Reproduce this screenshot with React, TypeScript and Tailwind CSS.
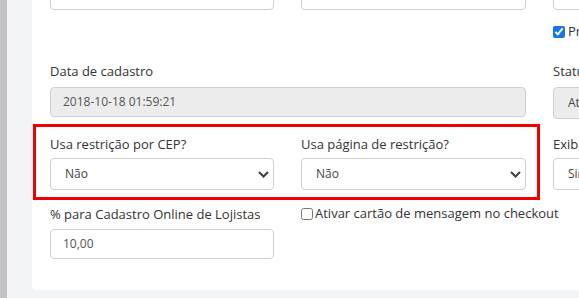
import { ReactNode } from 'react';

const font = { fontFamily: '"Open Sans", "Liberation Sans", sans-serif' };

const Label = ({ children }: { children: ReactNode }) => (
    <div className="h-[18px] leading-[18px] text-[13px] text-[#333] whitespace-nowrap">{children}</div>
);

const TextInput = ({ value, disabled }: { value?: string; disabled?: boolean }) => (
    <div className={`h-[30px] flex items-center px-[12px] border border-[#cfcfcf] rounded-[4px] text-[12px] text-[#555] whitespace-nowrap overflow-hidden ${disabled ? 'bg-[#ececec]' : 'bg-white'}`}>
        {value}
    </div>
);

const Select = ({ value, disabled }: { value: string; disabled?: boolean }) => (
    <div className={`h-[32px] flex items-center justify-between pl-[14px] pr-[4px] border border-[#cfcfcf] rounded-[4px] text-[12px] text-[#444] whitespace-nowrap ${disabled ? 'bg-[#ececec]' : 'bg-white'}`}>
        <span>{value}</span>
        <svg width="11" height="7" viewBox="0 0 11 7" className="shrink-0">
            <polyline points="1,1 5.5,5.5 10,1" fill="none" stroke="#3a3f44" strokeWidth="2" />
        </svg>
    </div>
);

export default function App() {
    return (
        <div className="w-[579px] h-[298px] overflow-hidden flex bg-[#f3f4f6]" style={font}>
            <div className="w-[7px] shrink-0 bg-[#c2c2c2]" />
            <div className="flex-1 pl-[25px] pb-[8px] flex flex-col overflow-hidden">
                <div className="mt-[-40px] flex-1 bg-white rounded-b-[4px] pt-[20px] pl-[18px] w-[620px]">
                    {/* top row, scrolled out of view */}
                    <div className="grid grid-cols-[224px_225px_225px] gap-x-[27px]">
                        <div className="h-[30px] px-[12px] pt-[3px] leading-[18px] border border-[#cfcfcf] rounded-[4px] text-[12px] text-[#555] whitespace-nowrap overflow-hidden">
                            pagamento_grupo_pagseguro
                        </div>
                        <div className="h-[30px] border border-[#cfcfcf] rounded-[4px]" />
                        <div>
                            <div className="h-[30px] border border-[#cfcfcf] rounded-[4px]" />
                            <label className="mt-[13px] h-[18px] flex items-center gap-[3px] text-[13px] text-[#333]">
                                <input type="checkbox" defaultChecked className="w-[12px] h-[12px] m-0 accent-[#1a73e8]" />
                                Produto
                            </label>
                        </div>
                    </div>

                    {/* data de cadastro */}
                    <div className="mt-[21px] grid grid-cols-[224px_225px_225px] gap-x-[27px]">
                        <div className="col-span-2">
                            <Label>Data de cadastro</Label>
                            <div className="mt-[7px]">
                                <TextInput value="2018-10-18 01:59:21" disabled />
                            </div>
                        </div>
                        <div>
                            <Label>Status</Label>
                            <div className="mt-[7px]">
                                <Select value="Ativo" disabled />
                            </div>
                        </div>
                    </div>

                    {/* restrição */}
                    <div className="relative mt-[16px] grid grid-cols-[224px_225px_225px] gap-x-[27px]">
                        <div className="absolute left-[-17px] top-[-11px] w-[507px] h-[76px] border-[3px] border-[#f00000] pointer-events-none" />
                        <div>
                            <Label>Usa restrição por CEP?</Label>
                            <div className="mt-[5px]">
                                <Select value="Não" />
                            </div>
                        </div>
                        <div>
                            <Label>Usa página de restrição?</Label>
                            <div className="mt-[5px]">
                                <Select value="Não" />
                            </div>
                        </div>
                        <div>
                            <Label>Exibir preço</Label>
                            <div className="mt-[5px]">
                                <Select value="Sim" />
                            </div>
                        </div>
                    </div>

                    {/* cadastro online */}
                    <div className="mt-[15px] grid grid-cols-[224px_225px_225px] gap-x-[27px]">
                        <div>
                            <Label>% para Cadastro Online de Lojistas</Label>
                            <div className="mt-[6px]">
                                <TextInput value="10,00" />
                            </div>
                        </div>
                        <div>
                            <label className="h-[18px] flex items-center gap-[2px] text-[13px] text-[#333] whitespace-nowrap">
                                <input type="checkbox" className="w-[12px] h-[12px] m-0" />
                                Ativar cartão de mensagem no checkout
                            </label>
                        </div>
                        <div />
                    </div>
                </div>
            </div>
        </div>
    );
}
